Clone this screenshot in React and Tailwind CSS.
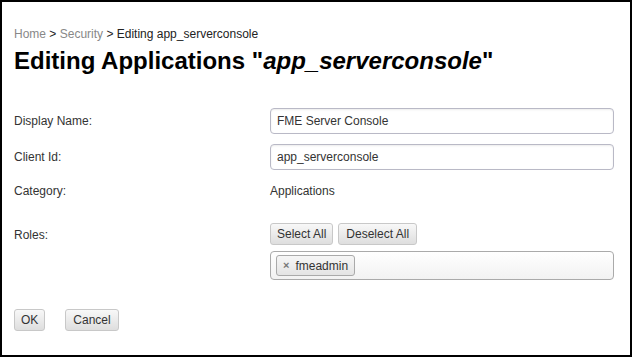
const btn =
  'h-[22px] px-[6px] text-[12px] text-[#333] border border-[#c8c8c8] rounded-[3px] bg-gradient-to-b from-[#f8f8f8] to-[#dedede] leading-none';

const input =
  'w-[344px] h-[26px] px-[6px] text-[12px] text-[#333] border border-[#b9b9c6] rounded-[4px] shadow-[inset_0_1px_2px_rgba(0,0,0,0.08)] bg-white outline-none';

function Row({ label, children, className = '' }) {
  return (
    <div className={`flex items-center ${className}`}>
      <div className="w-[256px] text-[12px] text-[#333]">{label}</div>
      {children}
    </div>
  );
}

export default function App() {
  return (
    <div
      className="w-[632px] h-[357px] border-2 border-black bg-white pl-3 overflow-hidden"
      style={{ fontFamily: '"Liberation Sans", Arial, sans-serif' }}
    >
      <div className="pt-[25px] text-[12px] leading-[14px]">
        <span className="text-[#888]">Home</span>
        <span className="text-[#222]"> &gt; </span>
        <span className="text-[#888]">Security</span>
        <span className="text-[#222]"> &gt; Editing app_serverconsole</span>
      </div>
      <h1 className="mt-[7px] text-[24px] leading-[26px] font-bold text-black">
        Editing Applications "<i>app_serverconsole</i>"
      </h1>

      <div className="mt-[34px] flex flex-col">
        <Row label="Display Name:">
          <input className={input} defaultValue="FME Server Console" readOnly />
        </Row>
        <Row label="Client Id:" className="mt-[10px]">
          <input className={input} defaultValue="app_serverconsole" readOnly />
        </Row>
        <Row label="Category:" className="mt-[12px]">
          <span className="text-[12px] text-[#333]">Applications</span>
        </Row>
        <div className="flex mt-[23px]">
          <div className="w-[256px] text-[12px] text-[#333] pt-[3px]">Roles:</div>
          <div className="flex flex-col">
            <div className="flex gap-[5px]">
              <button className={btn}>Select All</button>
              <button className={`${btn} px-[7px]`}>Deselect All</button>
            </div>
            <div className="mt-[6px] w-[344px] h-[29px] border border-[#aaa] rounded-[4px] bg-gradient-to-b from-white to-[#f2f2f2] flex items-center px-[5px]">
              <div className="h-[21px] flex items-center gap-[6px] pl-[6px] pr-[6px] border border-[#aaa] rounded-[3px] bg-gradient-to-b from-[#f6f6f6] to-[#e4e4e4] text-[12px] text-[#333]">
                <span className="text-[#777] text-[11px] font-bold leading-none">×</span>
                <span>fmeadmin</span>
              </div>
            </div>
          </div>
        </div>
      </div>

      <div className="mt-[29px] flex gap-[20px]">
        <button className={`${btn} px-[6px]`}>OK</button>
        <button className={`${btn} px-[7px]`}>Cancel</button>
      </div>
    </div>
  );
}
